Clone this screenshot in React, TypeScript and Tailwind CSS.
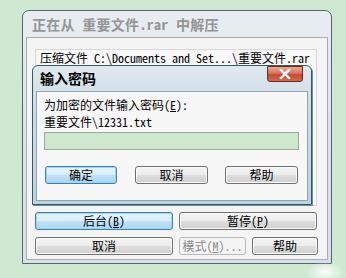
import React from "react";

const F = {
  fontFamily:
    '"Noto Sans Mono CJK SC", "Noto Sans CJK SC", "Liberation Mono", monospace',
};

function Btn({
  children,
  className = "",
  focus = false,
  disabled = false,
}: {
  children: React.ReactNode;
  className?: string;
  focus?: boolean;
  disabled?: boolean;
}) {
  const skin = disabled
    ? "border-[#b5b9bc] bg-[#f4f4f4] text-[#8a8a8a]"
    : focus
    ? "border-[#3c7fb1] bg-[linear-gradient(#e6f4fc,#d6eefb_50%,#bfe2f6_50%,#acd6ef)] text-black shadow-[inset_0_0_0_1px_#9fd6f4]"
    : "border-[#707070] bg-[linear-gradient(#f4f4f4,#ececec_50%,#dedede_50%,#d0d0d0)] text-black shadow-[inset_0_0_0_1px_#fbfbfb]";
  return (
    <div
      className={`flex items-center justify-center rounded-[3px] border text-[12px] leading-none ${skin} ${className}`}
      style={F}
    >
      {children}
    </div>
  );
}

export default function App() {
  return (
    <div className="relative h-[278px] w-[346px] overflow-hidden bg-[#cfe8d2]" style={F}>
      <div className="pl-[22px] pt-[10px]">
        {/* main window */}
        <div className="flex h-[254px] w-[310px] flex-col rounded-t-[7px] border border-[#5a646b] bg-[linear-gradient(#e8edf1,#dde5eb_40%,#d8e0e6)]">
          <div className="flex h-[26px] items-center pl-[9px] text-[14px] font-bold tracking-[0.3px] text-[#959595]">
            正在从 重要文件.rar 中解压
          </div>
          <div className="mx-[3px] mb-[3px] flex flex-1 flex-col border border-[#a3aeb6] bg-[#f4f4f4] px-[8px] pt-[11px]">
            <div className="h-[157px] w-[282px] border border-[#d6d6d6] bg-[#f7f7f7] pl-[4px] pt-[1px]">
              <div className="text-[12px] leading-[14px] text-black">
                <span className="underline underline-offset-2">压缩文件</span> C:\Documents and Set...\重要文件.rar
              </div>
            </div>
            <div className="mt-[6px] flex gap-[6px]">
              <Btn focus className="h-[18px] w-[138px]">
                后台(<span className="underline">B</span>)
              </Btn>
              <Btn className="h-[18px] w-[138px]">
                暂停(<span className="underline">P</span>)
              </Btn>
            </div>
            <div className="mt-[7px] flex gap-[6px]">
              <Btn className="h-[18px] w-[138px]">取消</Btn>
              <Btn disabled className="h-[18px] w-[67px]">
                模式(<span className="underline">M</span>)...
              </Btn>
              <Btn className="h-[18px] w-[66px]">帮助</Btn>
            </div>
          </div>
        </div>
      </div>

      {/* password dialog */}
      <div className="absolute left-[32px] top-[65px] flex h-[140px] w-[280px] flex-col rounded-t-[6px] border border-[#2f5a6c] bg-[linear-gradient(#dfe8ee,#cddde7_30%,#bcd3e0)] shadow-[1px_1px_0_#6f8f9c]">
          <div className="relative flex h-[25px] items-center pl-[7px] text-[14px] font-bold text-black">
            输入密码
            <div className="absolute right-[8px] top-[0px] flex h-[16px] w-[36px] items-center justify-center rounded-b-[3px] border border-[#6a2a1c] bg-[linear-gradient(#e9a99a,#d8745f_45%,#c4482f_55%,#cf6a4f)]">
              <svg width="12" height="10" viewBox="0 0 12 10">
                <path d="M2 1 L10 9 M10 1 L2 9" stroke="#ffffff" strokeWidth="2.4" strokeLinecap="square" />
              </svg>
            </div>
          </div>
          <div className="mx-[3px] mb-[3px] flex-1 border border-[#8ea4b1] bg-[#f7f7f7] pl-[7px] pt-[4px]">
            <div className="text-[12px] leading-[17px] text-black">
              为加密的文件输入密码(<span className="underline">E</span>):
            </div>
            <div className="text-[12px] leading-[17px] text-black">重要文件\12331.txt</div>
            <div className="mt-[2px] h-[18px] w-[255px] border border-[#9aa89e] bg-[#cde8cf]" />
            <div className="mt-[16px] flex pl-[1px]">
              <Btn focus className="h-[18px] w-[72px]">确定</Btn>
              <Btn className="ml-[18px] h-[18px] w-[73px]">取消</Btn>
              <Btn className="ml-[17px] h-[18px] w-[73px]">帮助</Btn>
            </div>
          </div>
      </div>

      {/* faint watermark blob */}
      <div className="absolute left-[305px] top-[262px] h-[20px] w-[40px] rounded-full bg-[radial-gradient(closest-side,rgba(255,255,255,0.9),rgba(255,255,255,0))]" />
    </div>
  );
}
